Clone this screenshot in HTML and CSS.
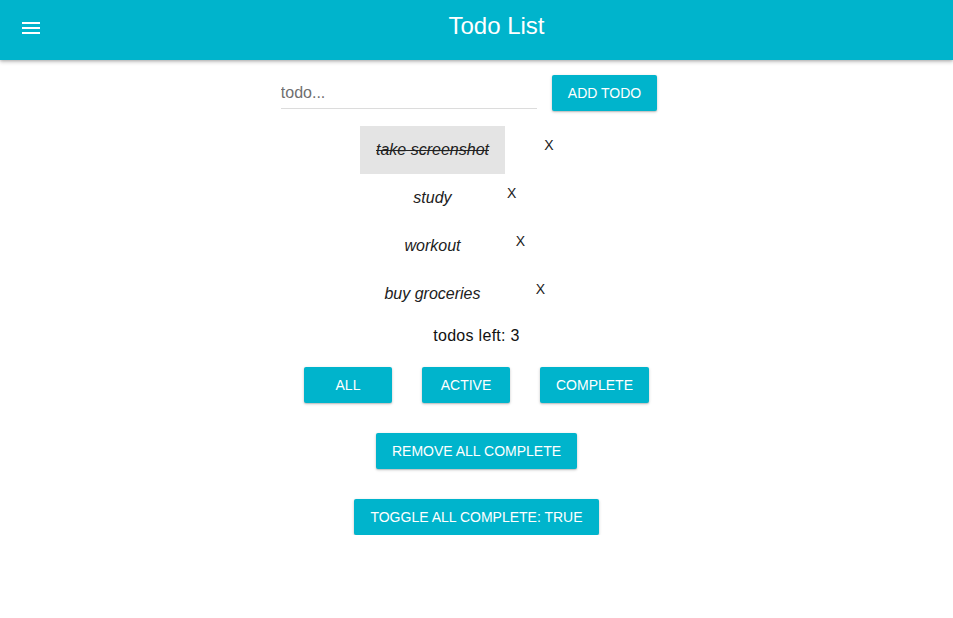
FILE: index.html
```html
<!DOCTYPE html>
<html>
<head>
<meta charset="utf-8">
<title>Todo List</title>
<link rel="stylesheet" href="styles.css">
</head>
<body>
<header class="appbar">
  <button class="menu-btn" aria-label="menu">
    <svg width="24" height="24" viewBox="0 0 24 24"><path fill="#fff" d="M3 18h18v-2H3v2zm0-5h18v-2H3v2zm0-7v2h18V6H3z"/></svg>
  </button>
  <h1 class="title">Todo List</h1>
</header>
<main class="content">
  <div class="add-row">
    <input class="todo-input" type="text" placeholder="todo...">
    <button class="btn btn-raised">Add Todo</button>
  </div>
  <ul class="todo-list">
    <li class="todo-row"><span class="todo-text done">take screenshot</span><button class="btn-flat">X</button></li>
    <li class="todo-row"><span class="todo-text">study</span><button class="btn-flat">X</button></li>
    <li class="todo-row"><span class="todo-text">workout</span><button class="btn-flat">X</button></li>
    <li class="todo-row"><span class="todo-text">buy groceries</span><button class="btn-flat">X</button></li>
  </ul>
  <div class="counter">todos left: 3</div>
  <div class="filter-row">
    <button class="btn btn-raised">All</button>
    <button class="btn btn-raised">Active</button>
    <button class="btn btn-raised">Complete</button>
  </div>
  <div class="action-row">
    <button class="btn btn-raised">Remove all complete</button>
  </div>
  <div class="action-row">
    <button class="btn btn-raised">Toggle all complete: true</button>
  </div>
</main>
</body>
</html>
```
FILE: styles.css
```css
* { box-sizing: border-box; }
html, body {
  margin: 0;
  padding: 0;
  background: #fff;
  font-family: "Liberation Sans", Arial, sans-serif;
  color: #212121;
}
.appbar {
  height: 60px;
  background: #00b4cc;
  display: flex;
  align-items: center;
  padding: 0 15px 4px 7px;
  box-shadow: 0 2px 4px rgba(0,0,0,0.22), 0 1px 2px rgba(0,0,0,0.12);
  position: relative;
  z-index: 1;
}
.menu-btn {
  width: 48px;
  height: 48px;
  border: 0;
  background: transparent;
  padding: 0;
  display: flex;
  align-items: center;
  justify-content: center;
}
.title {
  flex: 1;
  margin: 0 0 4px 0;
  text-align: center;
  color: #fff;
  font-size: 24px;
  font-weight: 400;
}
.content {
  display: flex;
  flex-direction: column;
  align-items: center;
}
.add-row {
  display: flex;
  align-items: flex-start;
  margin-top: 15px;
}
.todo-input {
  width: 256px;
  height: 34px;
  border: 0;
  border-bottom: 1px solid #dcdcdc;
  padding: 2px 0 0 0;
  font-family: "Liberation Sans", Arial, sans-serif;
  font-size: 16px;
  color: #212121;
  outline: none;
  background: transparent;
}
.todo-input::placeholder { color: #6f6f6f; }
.btn {
  font-family: "Liberation Sans", Arial, sans-serif;
  font-size: 14px;
  text-transform: uppercase;
  border: 0;
  cursor: pointer;
}
.btn-raised {
  height: 36px;
  min-width: 88px;
  padding: 0 16px;
  margin: 0 15px;
  background: #00b4cc;
  color: #fff;
  border-radius: 2px;
  box-shadow: 0 1px 3px rgba(0,0,0,0.22), 0 1px 1px rgba(0,0,0,0.1);
}
.todo-list {
  list-style: none;
  margin: 15px 0 0 0;
  padding: 0;
  display: flex;
  flex-direction: column;
  align-items: center;
}
.todo-row {
  display: flex;
  align-items: flex-start;
  height: 48px;
}
.todo-text {
  height: 48px;
  line-height: 48px;
  padding: 0 16px;
  font-size: 16px;
  font-style: italic;
  color: #212121;
}
.todo-text.done {
  background: #e4e4e4;
  text-decoration: line-through;
}
.btn-flat {
  min-width: 88px;
  height: 36px;
  margin-top: 1px;
  padding: 0 8px;
  border: 0;
  background: transparent;
  font-family: "Liberation Sans", Arial, sans-serif;
  font-size: 14px;
  color: #212121;
}
.counter {
  margin-top: 9px;
  font-size: 16px;
  line-height: 18px;
  letter-spacing: 0.3px;
  color: #111;
}
.filter-row {
  display: flex;
  margin-top: 22px;
}
.action-row {
  display: flex;
  margin-top: 30px;
}
```
